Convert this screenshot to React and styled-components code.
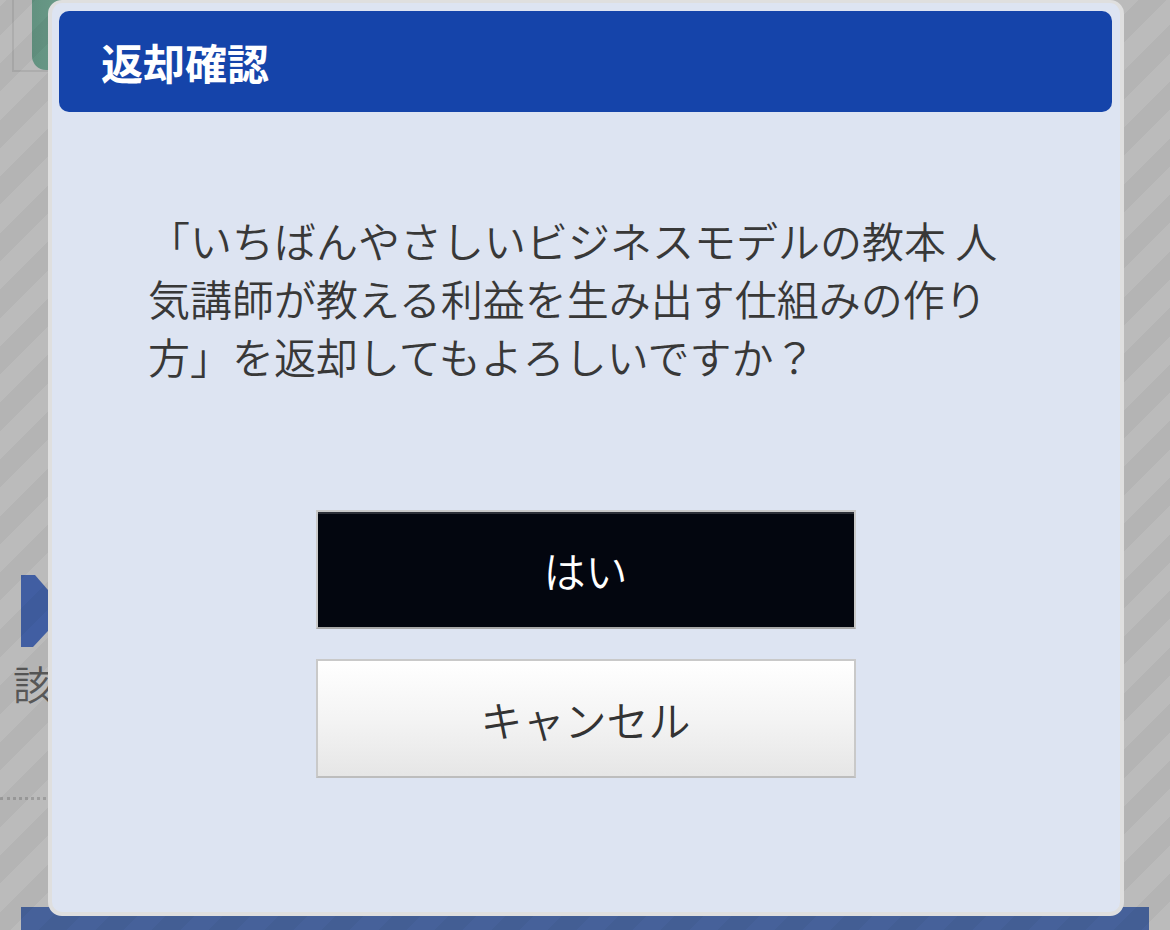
import React from 'react';
import styled, { createGlobalStyle } from 'styled-components';

const GlobalStyle = createGlobalStyle`
  html, body {
    margin: 0;
    padding: 0;
    background: #ffffff;
    overflow: hidden;
  }
  body {
    font-family: "Noto Sans CJK JP", "Noto Sans", sans-serif;
  }
`;

// page behind the dialog
const Page = styled.div`
  width: 1170px;
  height: 930px;
  display: flex;
  flex-direction: column;
`;

const ThumbFrame = styled.div`
  margin-left: 12px;
  width: 150px;
  height: 88px;
  border: 2px solid #ececec;
  border-top: none;
  padding-left: 18px;
`;

const Cover = styled.div`
  width: 120px;
  height: 70px;
  background: linear-gradient(90deg, #86c7af 0%, #95d6be 30%, #95d6be 100%);
  border-bottom-left-radius: 14px;
`;

const ArrowRow = styled.div`
  margin-top: 503px;
  margin-left: 21px;
  height: 72px;
`;

const Notice = styled.div`
  margin-top: 12px;
  margin-left: 13px;
  font-size: 40px;
  line-height: 48px;
  font-weight: 350;
  color: #787878;
  white-space: nowrap;
`;

const Dotted = styled.div`
  margin-top: 90px;
  width: 400px;
  border-top: 3px dotted #d6d6d6;
`;

const BottomBar = styled.div`
  margin-top: 107px;
  margin-left: 21px;
  width: 1128px;
  height: 40px;
  background: #6085d2;
`;

const Overlay = styled.div`
  position: fixed;
  inset: 0;
  background: repeating-linear-gradient(
    -45deg,
    rgba(0, 0, 0, 0.265) 0px,
    rgba(0, 0, 0, 0.265) 20px,
    rgba(0, 0, 0, 0.295) 20px,
    rgba(0, 0, 0, 0.295) 40px
  );
`;

// dialog
const Dialog = styled.div`
  position: fixed;
  left: 48px;
  top: 0;
  width: 1076px;
  height: 916px;
  box-sizing: border-box;
  border: 4px solid #dfdfdf;
  border-top-width: 3px;
  border-radius: 14px;
  background: #dde4f2;
  padding: 8px 8px 0 7px;
  display: flex;
  flex-direction: column;
`;

const TitleBar = styled.div`
  height: 101px;
  background: #1544aa;
  border-radius: 10px;
  display: flex;
  align-items: center;
  padding-left: 42px;
`;

const Title = styled.h1`
  margin: 0;
  font-size: 42px;
  font-weight: 700;
  color: #ffffff;
  line-height: 1;
`;

const Content = styled.div`
  padding: 99px 0 0 89px;
`;

const Message = styled.p`
  margin: 0;
  max-width: 866px;
  font-size: 42px;
  font-weight: 350;
  line-height: 58px;
  color: #383838;
`;

const Buttons = styled.div`
  margin-top: 125px;
  display: flex;
  flex-direction: column;
  align-items: center;
  gap: 30px;
`;

const Button = styled.button`
  width: 540px;
  height: 119px;
  box-sizing: border-box;
  border: 2px solid #c9c9c9;
  border-bottom-color: ${p => (p.$primary ? '#a9a9a9' : '#bdbdbd')};
  border-radius: 0;
  font-family: "Noto Sans CJK JP", "Noto Sans", sans-serif;
  font-size: 42px;
  font-weight: 350;
  padding: 0;
  color: ${p => (p.$primary ? '#ffffff' : '#333333')};
  background: ${p => (p.$primary ? '#03060f' : 'linear-gradient(180deg, #ffffff 0%, #f4f4f4 50%, #e6e6e6 100%)')};
  box-shadow: ${p => (p.$primary ? 'inset 0 2px 0 #2c2f37' : 'none')};
  cursor: pointer;
`;

export default function App() {
  return (
    <>
      <GlobalStyle />
      <Page>
        <ThumbFrame>
          <Cover />
        </ThumbFrame>
        <ArrowRow>
          <svg width="40" height="72" viewBox="0 0 40 72">
            <polygon points="0,0 14,0 40,30 40,42 12,72 0,72" fill="#5981dd" />
          </svg>
        </ArrowRow>
        <Notice>該当する書籍はありません</Notice>
        <Dotted />
        <BottomBar />
      </Page>
      <Overlay />
      <Dialog>
        <TitleBar>
          <Title>返却確認</Title>
        </TitleBar>
        <Content>
          <Message>
            「いちばんやさしいビジネスモデルの教本 人気講師が教える利益を生み出す仕組みの作り方」を返却してもよろしいですか？
          </Message>
        </Content>
        <Buttons>
          <Button $primary>はい</Button>
          <Button>キャンセル</Button>
        </Buttons>
      </Dialog>
    </>
  );
}
